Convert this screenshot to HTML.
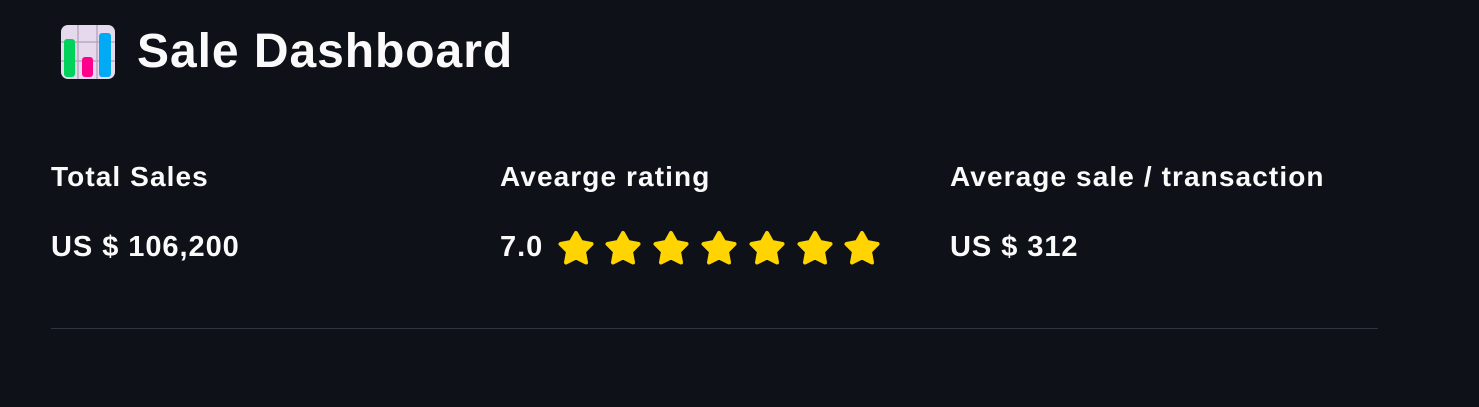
<!DOCTYPE html>
<html><head><style>
body{margin:0;width:1479px;height:407px;background:#0e1117;color:#fafafa;font-family:"Liberation Sans",sans-serif;position:relative;overflow:hidden}
.t{position:absolute;white-space:nowrap;font-weight:bold}
.h{left:137px;top:24px;font-size:48px;letter-spacing:0.95px}
.l{top:161px;font-size:28px;letter-spacing:1.1px}
.v{top:231px;font-size:29px;letter-spacing:0.95px}
.hr{position:absolute;left:51px;top:328px;width:1327px;height:1px;background:#31333f}
</style></head><body>
<svg style="position:absolute;left:61px;top:25px" width="54" height="54" viewBox="0 0 54 54">
<rect x="0" y="0" width="54" height="54" rx="7" fill="#e6d9ee"/>
<path d="M17 0V54M36 0V54M0 17H54M0 36H54" stroke="#b7aabd" stroke-width="1.5"/>
<rect x="3" y="14" width="11" height="38" rx="3" fill="#00d25b"/>
<rect x="21" y="32" width="11" height="20" rx="3" fill="#ff008c"/>
<rect x="38" y="8" width="12" height="44" rx="3" fill="#00aaf5"/>
</svg>
<div class="t h">Sale Dashboard</div>
<div class="t l" style="left:51px">Total Sales</div>
<div class="t l" style="left:500px">Avearge rating</div>
<div class="t l" style="left:950px">Average sale / transaction</div>
<div class="t v" style="left:51px">US $ 106,200</div>
<div class="t v" style="left:500px">7.0</div>
<div class="t v" style="left:950px">US $ 312</div>
<svg style="position:absolute;left:555px;top:229px" width="330" height="40" viewBox="0 0 330 40">
<defs><path id="s" d="M0,-16 L5,-7 L15.5,-5 L8,2.5 L10,13.5 L0,8.5 L-10,13.5 L-8,2.5 L-15.5,-5 L-5,-7Z" fill="#ffd400" stroke="#ffd400" stroke-width="4" stroke-linejoin="round"/></defs>
<use href="#s" x="21" y="20"/><use href="#s" x="68" y="20"/><use href="#s" x="116" y="20"/><use href="#s" x="164" y="20"/><use href="#s" x="212" y="20"/><use href="#s" x="260" y="20"/><use href="#s" x="307" y="20"/>
</svg>
<div class="hr"></div>
</body></html>
